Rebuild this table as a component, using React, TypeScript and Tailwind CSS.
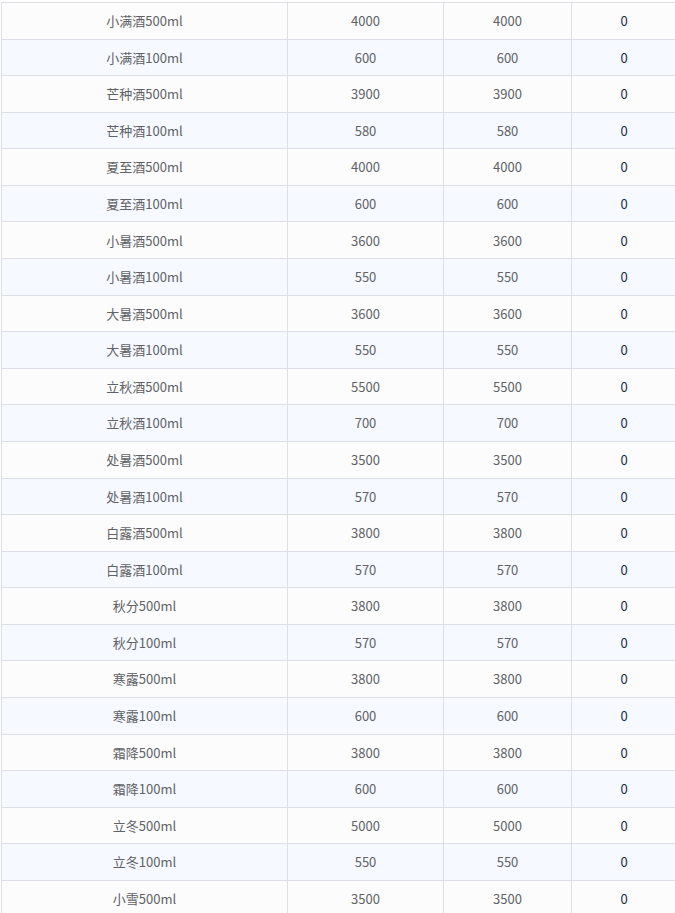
const rows: [string, number][] = [
  ["小满酒500ml", 4000],
  ["小满酒100ml", 600],
  ["芒种酒500ml", 3900],
  ["芒种酒100ml", 580],
  ["夏至酒500ml", 4000],
  ["夏至酒100ml", 600],
  ["小暑酒500ml", 3600],
  ["小暑酒100ml", 550],
  ["大暑酒500ml", 3600],
  ["大暑酒100ml", 550],
  ["立秋酒500ml", 5500],
  ["立秋酒100ml", 700],
  ["处暑酒500ml", 3500],
  ["处暑酒100ml", 570],
  ["白露酒500ml", 3800],
  ["白露酒100ml", 570],
  ["秋分500ml", 3800],
  ["秋分100ml", 570],
  ["寒露500ml", 3800],
  ["寒露100ml", 600],
  ["霜降500ml", 3800],
  ["霜降100ml", 600],
  ["立冬500ml", 5000],
  ["立冬100ml", 550],
  ["小雪500ml", 3500],
];

export default function App() {
  return (
    <div
      className="h-[913px] w-[675px] overflow-hidden bg-white pl-[1px] pt-[2px]"
      style={{ fontFamily: '"Microsoft YaHei", "Noto Sans CJK SC", "Noto Sans", sans-serif' }}
    >
      <table className="w-[680px] table-fixed border-collapse text-[13px] text-[#606266]">
        <colgroup>
          <col className="w-[286px]" />
          <col className="w-[156px]" />
          <col className="w-[128px]" />
          <col className="w-[110px]" />
        </colgroup>
        <tbody>
          {rows.map(([name, qty], i) => (
            <tr
              key={name}
              className={i % 2 === 0 ? "bg-[#fcfcfc]" : "bg-[#f6f9ff]"}
            >
              <td className="h-[36.58px] border border-[#dcdfe6] p-0 text-center">
                {name}
              </td>
              <td className="border border-[#dcdfe6] p-0 text-center">{qty}</td>
              <td className="border border-[#dcdfe6] p-0 text-center">{qty}</td>
              <td className="border border-[#dcdfe6] p-0 pr-[5px] text-center text-[#1a2b45]">
                0
              </td>
            </tr>
          ))}
        </tbody>
      </table>
    </div>
  );
}
